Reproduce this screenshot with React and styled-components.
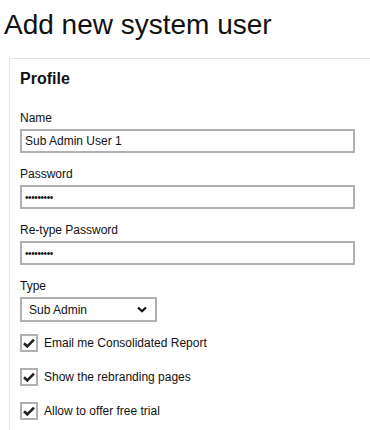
import React, {useState} from "react";
import styled, {createGlobalStyle} from "styled-components";

const GlobalStyle = createGlobalStyle`
  html, body {
    margin: 0;
    padding: 0;
    background: #fff;
    font-family: "Liberation Sans", Arial, sans-serif;
    color: #111;
  }
`;

const Page = styled.div`
  width: 370px;
  height: 430px;
  overflow: hidden;
`;

const Title = styled.h1`
  font-size: 28px;
  font-weight: 400;
  margin: 0;
  padding: 8px 0 0 4px;
  height: 58px;
  box-sizing: border-box;
  line-height: 34px;
  color: #111;
`;

const Panel = styled.div`
  margin-left: 9px;
  width: 400px;
  border-top: 1px solid #e3e3e3;
  border-left: 1px solid #e3e3e3;
  padding: 10px 10px 0 10px;
  min-height: 380px;
`;

const PanelTitle = styled.h2`
  font-size: 16px;
  font-weight: 700;
  margin: 0 0 22px 0;
  line-height: 20px;
`;

const Field = styled.div`
  display: flex;
  flex-direction: column;
  margin-bottom: ${(p) => p.$gap ?? 14}px;
`;

const Label = styled.label`
  font-size: 12px;
  line-height: 14px;
  margin-bottom: 4px;
`;

const TextInput = styled.input`
  box-sizing: border-box;
  width: 335px;
  height: 24px;
  border: 2px solid #b0b0b0;
  padding: 0 3px;
  font-family: "Liberation Sans", Arial, sans-serif;
  font-size: 12px;
  color: #111;
  outline: none;
  background: #fff;
  &[type="password"] {
    font-size: 10px;
    letter-spacing: -0.4px;
  }
`;

const SelectBox = styled.div`
  box-sizing: border-box;
  width: 137px;
  height: 25px;
  border: 2px solid #b0b0b0;
  display: flex;
  align-items: center;
  justify-content: space-between;
  padding: 0 8px 0 7px;
  font-size: 12px;
`;

const CheckRow = styled.div`
  display: flex;
  align-items: center;
  gap: 6px;
  height: 18px;
  margin-bottom: 16px;
  font-size: 12px;
`;

const Box = styled.span`
  box-sizing: border-box;
  width: 18px;
  height: 18px;
  border: 2px solid #b0b0b0;
  background: #fff;
  display: flex;
  align-items: center;
  justify-content: center;
`;

function Check() {
    return (
        <Box>
            <svg width="12" height="10" viewBox="0 0 12 10">
                <path d="M1 5.2 L4.3 8.4 L11 1.6" fill="none" stroke="#222" strokeWidth="2.6" />
            </svg>
        </Box>
    );
}

export default function App() {
    const [name, setName] = useState("Sub Admin User 1");
    const options = ["Email me Consolidated Report", "Show the rebranding pages", "Allow to offer free trial"];

    return (
        <Page>
            <GlobalStyle />
            <Title>Add new system user</Title>
            <Panel>
                <PanelTitle>Profile</PanelTitle>
                <Field>
                    <Label>Name</Label>
                    <TextInput value={name} onChange={(e) => setName(e.target.value)} />
                </Field>
                <Field>
                    <Label>Password</Label>
                    <TextInput type="password" defaultValue="123456789" readOnly />
                </Field>
                <Field>
                    <Label>Re-type Password</Label>
                    <TextInput type="password" defaultValue="123456789" readOnly />
                </Field>
                <Field $gap={12}>
                    <Label>Type</Label>
                    <SelectBox>
                        <span>Sub Admin</span>
                        <svg width="10" height="7" viewBox="0 0 10 7">
                            <path d="M1 1.5 L5 5.2 L9 1.5" fill="none" stroke="#111" strokeWidth="2.2" />
                        </svg>
                    </SelectBox>
                </Field>
                {options.map((o) => (
                    <CheckRow key={o}>
                        <Check />
                        <span>{o}</span>
                    </CheckRow>
                ))}
            </Panel>
        </Page>
    );
}
